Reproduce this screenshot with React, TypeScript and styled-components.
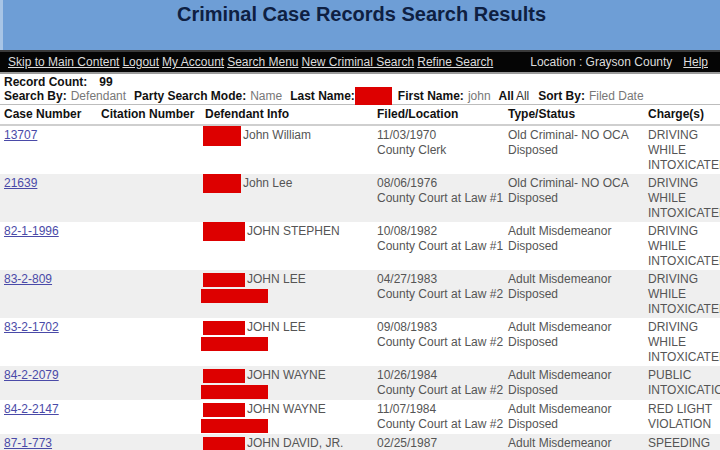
import React from "react";
import styled, { createGlobalStyle } from "styled-components";

const GlobalStyle = createGlobalStyle`
  html, body {
    margin: 0;
    padding: 0;
    background: #ffffff;
    overflow: hidden;
    font-family: "Liberation Sans", Arial, sans-serif;
  }
`;

const Page = styled.div`
  width: 720px;
  height: 450px;
  overflow: hidden;
`;

const Banner = styled.header`
  height: 50px;
  background-color: #6e9ed6;
  border-left: 3px solid #a8c5e6;
  display: flex;
  justify-content: center;
  align-items: flex-start;
  h1 {
    margin: 2px 0 0 0;
    font-size: 20px;
    line-height: 24px;
    font-weight: bold;
    color: #0e2042;
  }
`;

const NavBar = styled.nav`
  height: 20px;
  background-color: #050505;
  border-top: 2px solid #3a3a3a;
  border-bottom: 2px solid #9a9a9a;
  display: flex;
  align-items: center;
  padding: 0 12px 0 8px;
  font-size: 12px;
  color: #dcdcdc;
`;

const NavLinks = styled.div`
  display: flex;
  gap: 3px;
  flex: 1;
`;

const NavLink = styled.a`
  color: #dcdcdc;
  text-decoration: underline;
`;

const Location = styled.span`
  margin-right: 11px;
`;

const Summary = styled.div`
  padding: 1px 4px 1px 4px;
  font-size: 12px;
  line-height: 14px;
  border-bottom: 1px solid #bdbdbd;
`;

const SummaryLine = styled.div`
  display: flex;
  align-items: center;
  white-space: nowrap;
`;

const Label = styled.b<{ $gap?: number }>`
  color: #111;
  margin-left: ${(p) => p.$gap ?? 0}px;
`;

const Value = styled.span<{ $tone?: "bold" | "dark" | "light"; $gap?: number }>`
  color: ${(p) => (p.$tone === "bold" ? "#111" : p.$tone === "dark" ? "#333" : "#777")};
  font-weight: ${(p) => (p.$tone === "bold" ? "bold" : "normal")};
  margin-left: ${(p) => p.$gap ?? 4}px;
`;

const Redacted = styled.span<{ $w: number; $h: number }>`
  display: inline-block;
  width: ${(p) => p.$w}px;
  height: ${(p) => p.$h}px;
  background-color: #dd0000;
  vertical-align: middle;
  margin: -4px 0;
`;

const InlineRedacted = styled(Redacted)`
  margin: -2px 0;
`;

const RedBar = styled.div<{ $w: number }>`
  width: ${(p) => p.$w}px;
  height: 14px;
  background-color: #dd0000;
  margin: 2px 0 0 -2px;
`;

const Table = styled.table`
  width: 728px;
  table-layout: fixed;
  border-collapse: collapse;
  font-size: 12px;
  line-height: 15px;
`;

const HeadCell = styled.th`
  text-align: left;
  font-weight: bold;
  color: #111;
  padding: 2px 4px 2px 4px;
  border-bottom: 2px solid #cfcfcf;
  white-space: nowrap;
`;

const Row = styled.tr<{ $shade: boolean }>`
  background-color: ${(p) => (p.$shade ? "#efefef" : "#ffffff")};
`;

const Cell = styled.td<{ $nowrap?: boolean }>`
  vertical-align: top;
  padding: 2px 4px 1px 4px;
  color: #555;
  overflow: hidden;
  white-space: ${(p) => (p.$nowrap ? "nowrap" : "normal")};
`;

const DefCell = styled(Cell)`
  padding-left: 2px;
  white-space: nowrap;
`;

const CaseLink = styled.a`
  color: #4a4aa8;
  text-decoration: underline;
`;

const Name = styled.span`
  margin-left: 2px;
`;

type Record = {
  id: string;
  name: string;
  block: [number, number];
  bar?: number;
  filed: string;
  location: string;
  type: string;
  status: string;
  charge: string;
};

const records: Record[] = [
  { id: "13707", name: "John William", block: [38, 20], filed: "11/03/1970", location: "County Clerk", type: "Old Criminal- NO OCA", status: "Disposed", charge: "DRIVING WHILE INTOXICATED" },
  { id: "21639", name: "John Lee", block: [38, 19], filed: "08/06/1976", location: "County Court at Law #1", type: "Old Criminal- NO OCA", status: "Disposed", charge: "DRIVING WHILE INTOXICATED" },
  { id: "82-1-1996", name: "JOHN STEPHEN", block: [42, 19], filed: "10/08/1982", location: "County Court at Law #1", type: "Adult Misdemeanor", status: "Disposed", charge: "DRIVING WHILE INTOXICATED" },
  { id: "83-2-809", name: "JOHN LEE", block: [42, 14], bar: 67, filed: "04/27/1983", location: "County Court at Law #2", type: "Adult Misdemeanor", status: "Disposed", charge: "DRIVING WHILE INTOXICATED" },
  { id: "83-2-1702", name: "JOHN LEE", block: [42, 14], bar: 67, filed: "09/08/1983", location: "County Court at Law #2", type: "Adult Misdemeanor", status: "Disposed", charge: "DRIVING WHILE INTOXICATED" },
  { id: "84-2-2079", name: "JOHN WAYNE", block: [42, 14], bar: 67, filed: "10/26/1984", location: "County Court at Law #2", type: "Adult Misdemeanor", status: "Disposed", charge: "PUBLIC INTOXICATION" },
  { id: "84-2-2147", name: "JOHN WAYNE", block: [42, 14], bar: 67, filed: "11/07/1984", location: "County Court at Law #2", type: "Adult Misdemeanor", status: "Disposed", charge: "RED LIGHT VIOLATION" },
  { id: "87-1-773", name: "JOHN DAVID, JR.", block: [42, 14], bar: 67, filed: "02/25/1987", location: "County Court at Law #2", type: "Adult Misdemeanor", status: "Disposed", charge: "SPEEDING" },
];

const navItems = ["Skip to Main Content", "Logout", "My Account", "Search Menu", "New Criminal Search", "Refine Search"];

const App: React.FC = () => {
  return (
    <Page>
      <GlobalStyle />
      <Banner>
        <h1>Criminal Case Records Search Results</h1>
      </Banner>
      <NavBar>
        <NavLinks>
          {navItems.map((n) => (
            <NavLink key={n} href="#">{n}</NavLink>
          ))}
        </NavLinks>
        <Location>Location : Grayson County</Location>
        <NavLink href="#">Help</NavLink>
      </NavBar>
      <Summary>
        <SummaryLine>
          <Label>Record Count:</Label>
          <Value $tone="bold" $gap={12}>99</Value>
        </SummaryLine>
        <SummaryLine>
          <Label>Search By:</Label>
          <Value>Defendant</Value>
          <Label $gap={8}>Party Search Mode:</Label>
          <Value>Name</Value>
          <Label $gap={8}>Last Name:</Label>
          <InlineRedacted $w={37} $h={18} />
          <Label $gap={6}>First Name:</Label>
          <Value>john</Value>
          <Label $gap={8}>All</Label>
          <Value $tone="dark" $gap={2}>All</Value>
          <Label $gap={9}>Sort By:</Label>
          <Value>Filed Date</Value>
        </SummaryLine>
      </Summary>
      <Table>
        <colgroup>
          <col style={{ width: 97 }} />
          <col style={{ width: 104 }} />
          <col style={{ width: 172 }} />
          <col style={{ width: 131 }} />
          <col style={{ width: 140 }} />
          <col style={{ width: 84 }} />
        </colgroup>
        <thead>
          <tr>
            <HeadCell>Case Number</HeadCell>
            <HeadCell>Citation Number</HeadCell>
            <HeadCell>Defendant Info</HeadCell>
            <HeadCell>Filed/Location</HeadCell>
            <HeadCell>Type/Status</HeadCell>
            <HeadCell>Charge(s)</HeadCell>
          </tr>
        </thead>
        <tbody>
          {records.map((r, i) => (
            <Row key={r.id} $shade={i % 2 === 1}>
              <Cell>
                <CaseLink href="#">{r.id}</CaseLink>
              </Cell>
              <Cell />
              <DefCell>
                <Redacted $w={r.block[0]} $h={r.block[1]} />
                <Name>{r.name}</Name>
                {r.bar && <RedBar $w={r.bar} />}
              </DefCell>
              <Cell $nowrap>
                {r.filed}
                <br />
                {r.location}
              </Cell>
              <Cell $nowrap>
                {r.type}
                <br />
                {r.status}
              </Cell>
              <Cell>{r.charge}</Cell>
            </Row>
          ))}
        </tbody>
      </Table>
    </Page>
  );
};

export default App;
